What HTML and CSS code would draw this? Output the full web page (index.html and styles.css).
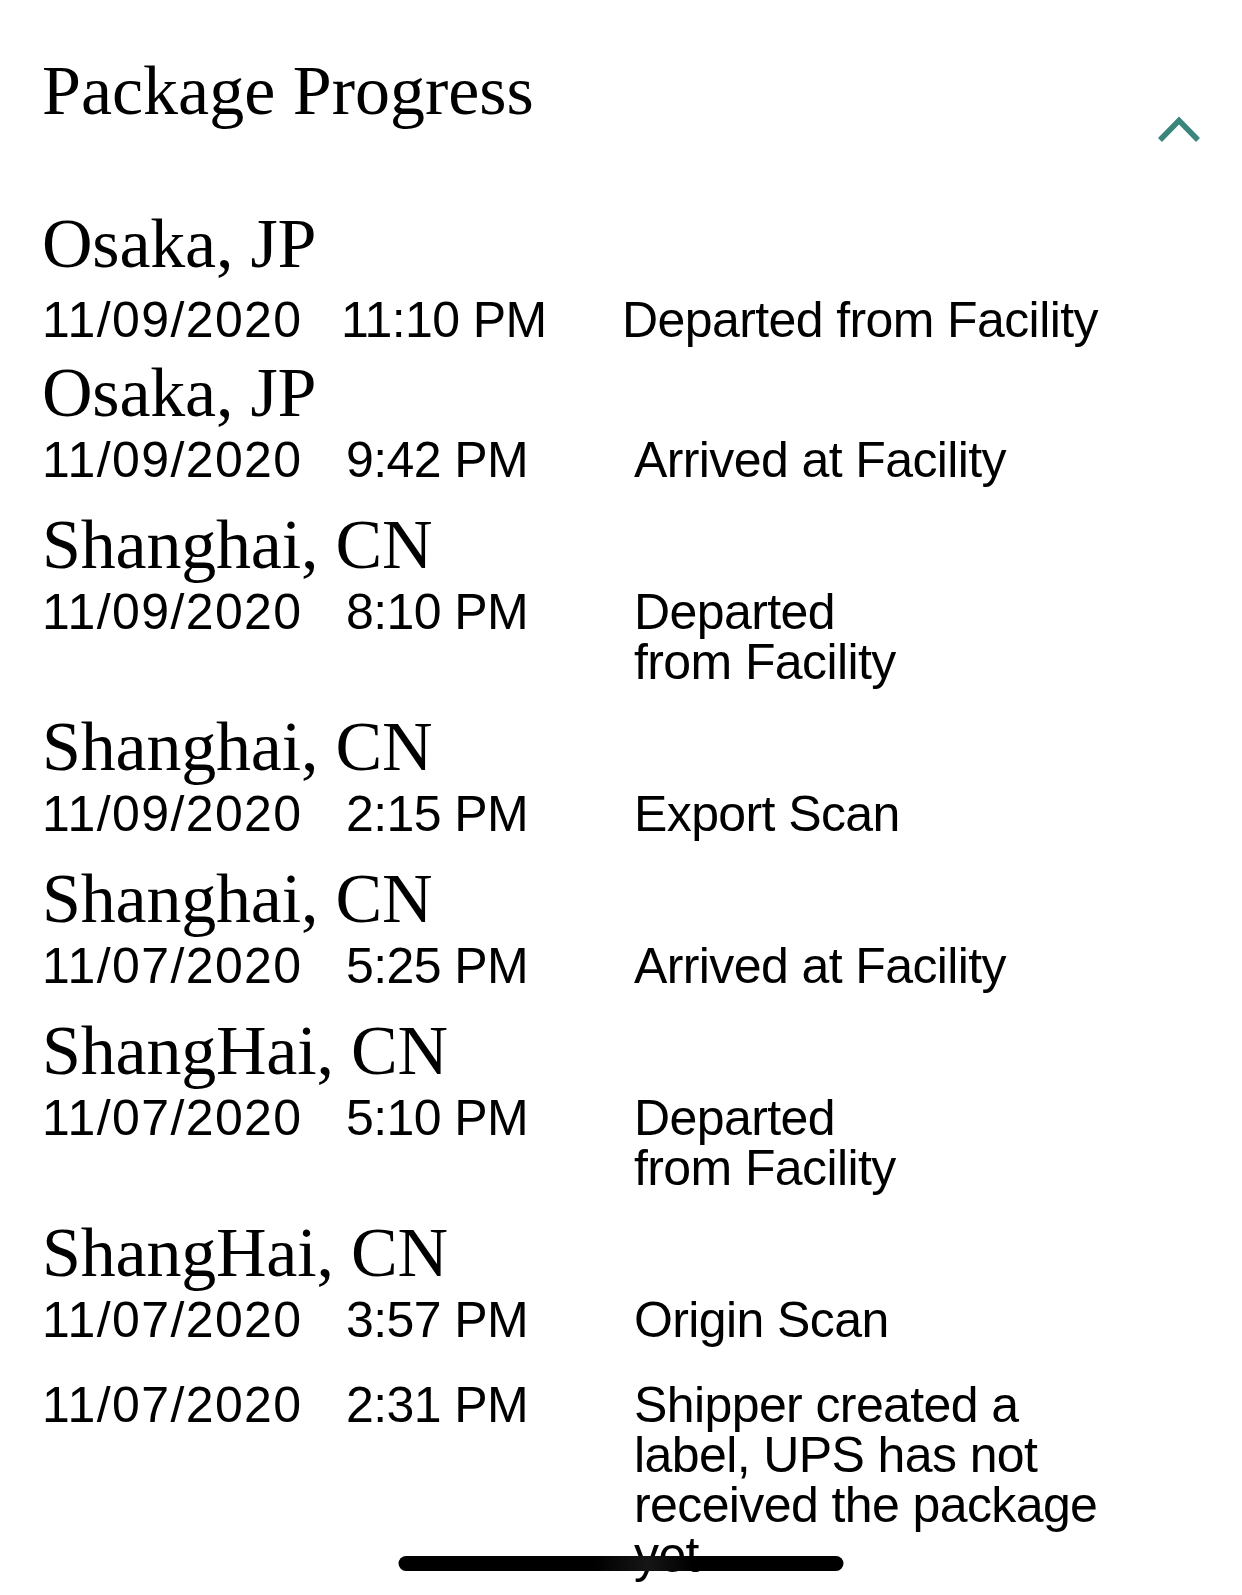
FILE: index.html
```html
<!DOCTYPE html>
<html lang="en">

<head>
  <meta charset="UTF-8">
  <meta name="viewport" content="width=device-width, initial-scale=1.0" />
  <title>Package Progress</title>
  <link rel="stylesheet" href="styles.css">
</head>

<body>

  <div class="page">
    <div class="header">
      <h1>Package Progress</h1>
      <!-- collapse toggle -->
      <svg class="chevron" width="50" height="30" viewBox="0 0 50 30">
        <polyline points="6,26 25,6.5 44,26" />
      </svg>
    </div>

    <div class="events">
      <div class="event event-first">
        <div class="location">Osaka, JP</div>
        <div class="row row-wide">
          <span class="date">11/09/2020</span>
          <span>11:10 PM</span>
          <span>Departed from Facility</span>
        </div>
      </div>

      <div class="event event-second">
        <div class="location">Osaka, JP</div>
        <div class="row">
          <span class="date">11/09/2020</span>
          <span>9:42 PM</span>
          <span>Arrived at Facility</span>
        </div>
      </div>

      <div class="event">
        <div class="location">Shanghai, CN</div>
        <div class="row">
          <span class="date">11/09/2020</span>
          <span>8:10 PM</span>
          <span>Departed<br>from Facility</span>
        </div>
      </div>

      <div class="event">
        <div class="location">Shanghai, CN</div>
        <div class="row">
          <span class="date">11/09/2020</span>
          <span>2:15 PM</span>
          <span>Export Scan</span>
        </div>
      </div>

      <div class="event">
        <div class="location">Shanghai, CN</div>
        <div class="row">
          <span class="date">11/07/2020</span>
          <span>5:25 PM</span>
          <span>Arrived at Facility</span>
        </div>
      </div>

      <div class="event">
        <div class="location">ShangHai, CN</div>
        <div class="row">
          <span class="date">11/07/2020</span>
          <span>5:10 PM</span>
          <span>Departed<br>from Facility</span>
        </div>
      </div>

      <div class="event">
        <div class="location">ShangHai, CN</div>
        <div class="row">
          <span class="date">11/07/2020</span>
          <span>3:57 PM</span>
          <span>Origin Scan</span>
        </div>
      </div>

      <div class="event event-noloc">
        <div class="row">
          <span class="date">11/07/2020</span>
          <span>2:31 PM</span>
          <span class="desc-long">Shipper created a label, UPS has not received the package yet</span>
        </div>
      </div>
    </div>
  </div>

  <div class="home-bar"></div>

</body>

</html>
```

FILE: styles.css
```css
:root {
  --text-color: #000000;
  --accent-color: #3a857c;
  --serif: 'Liberation Serif', 'Times New Roman', serif;
  --sans: 'Liberation Sans', Arial, sans-serif;
}

* {
  margin: 0;
  padding: 0;
  box-sizing: border-box;
}

html,
body {
  height: 100%;
  overflow: hidden;
  background: #ffffff;
  color: var(--text-color);
}

.page {
  padding: 51px 38px 0 42px;
}

.header {
  display: flex;
  justify-content: space-between;
  align-items: flex-start;
}

h1 {
  font-family: var(--serif);
  font-weight: normal;
  font-size: 70px;
  line-height: 80px;
}

.chevron {
  margin-top: 63px;
  fill: none;
  stroke: var(--accent-color);
  stroke-width: 5.5;
  stroke-linejoin: miter;
}

.events {
  margin-top: 62px;
}

.event {
  margin-top: 22px;
}

.event-first {
  margin-top: 0;
}

.event-second {
  margin-top: 10px;
}

.event-noloc {
  margin-top: 35px;
}

.location {
  font-family: var(--serif);
  font-size: 70px;
  line-height: 76px;
  letter-spacing: -0.2px;
}

.row {
  display: grid;
  grid-template-columns: 304px 288px 1fr;
  margin-top: 4px;
  font-family: var(--sans);
  font-size: 50px;
  line-height: 50px;
  letter-spacing: -0.6px;
}

.row .date {
  letter-spacing: 1.4px;
}

.row-wide {
  grid-template-columns: 299px 281px 1fr;
  margin-top: 13px;
}

.event-noloc .row {
  margin-top: 0;
}

.desc-long {
  max-width: 470px;
}

.home-bar {
  position: fixed;
  left: 50%;
  bottom: 24px;
  width: 445px;
  height: 15px;
  transform: translateX(-50%);
  border-radius: 8px;
  background: linear-gradient(90deg, #000 44%, #161616 56%, #000 66%);
}
```
